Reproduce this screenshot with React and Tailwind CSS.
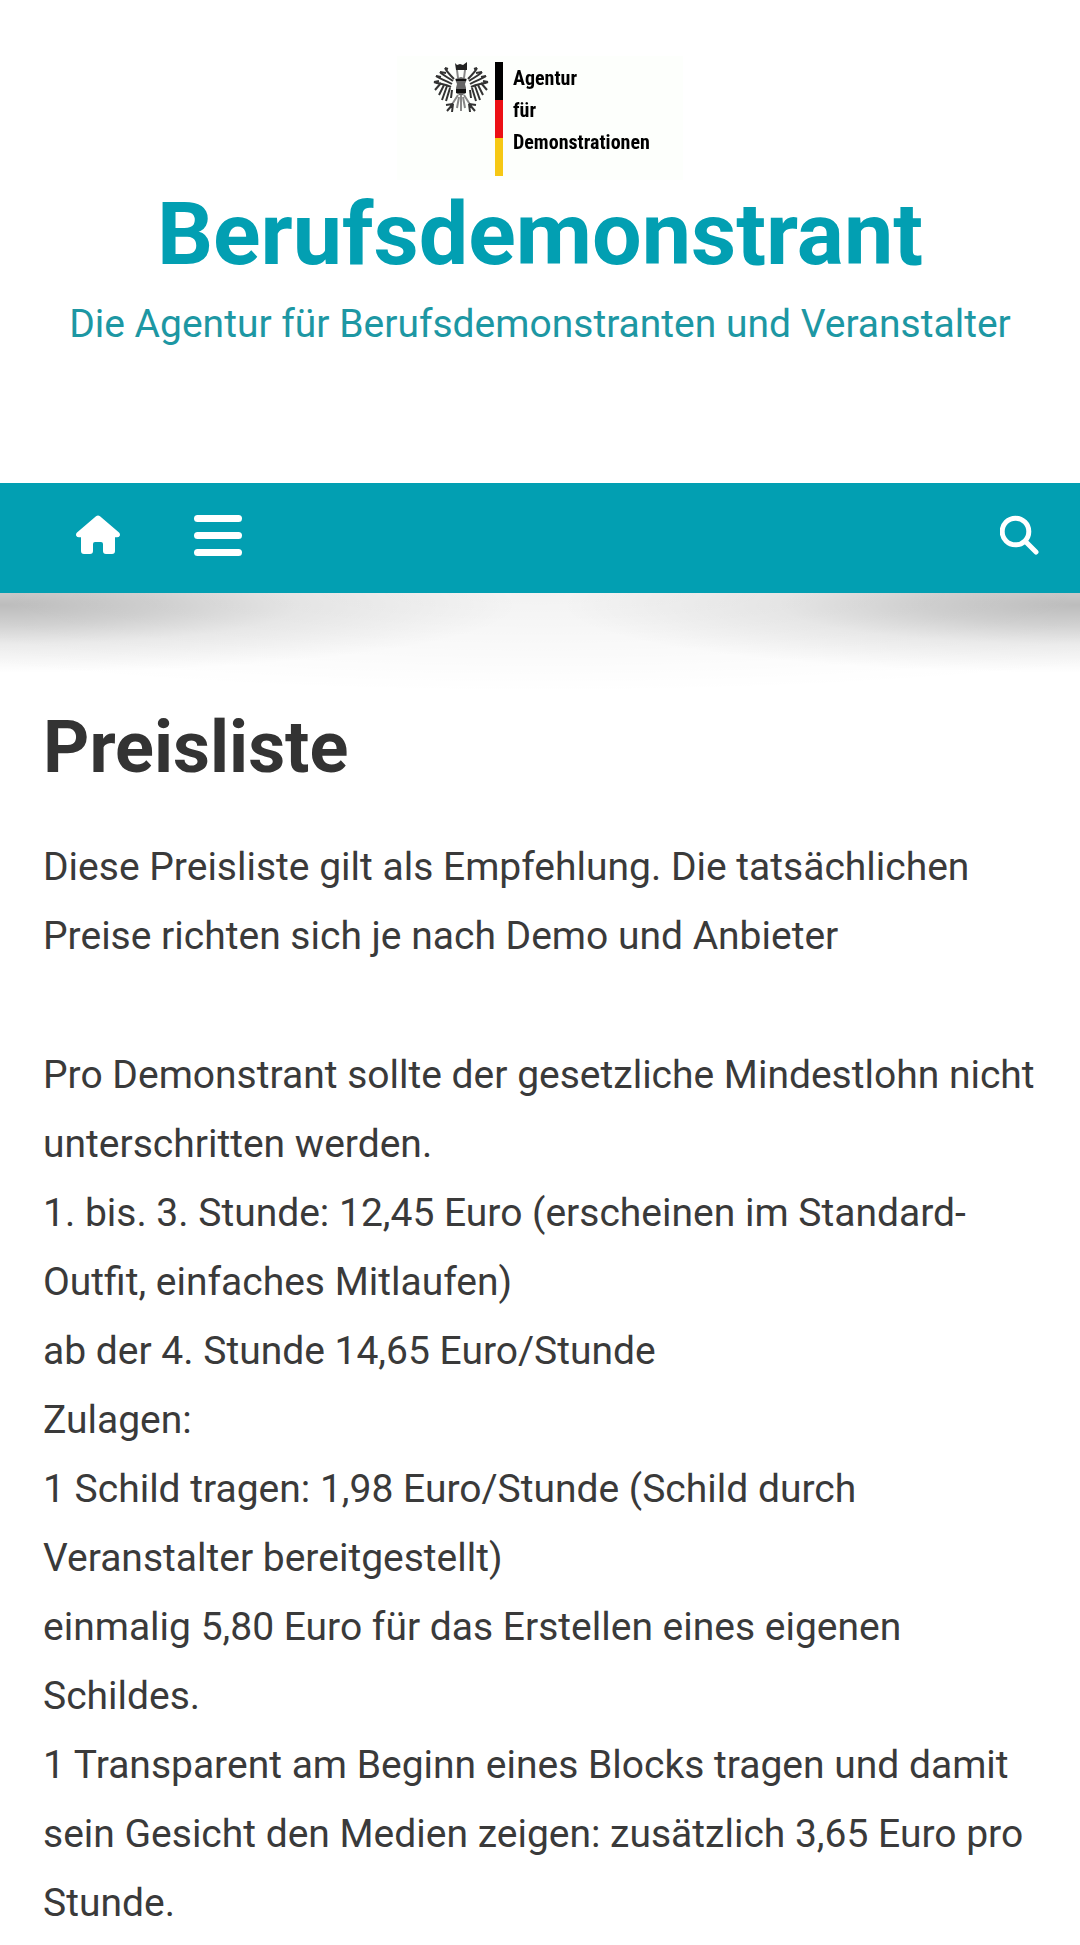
const FEATHERS = [
  "M21 17 C17 13 14 10 12 6 M20 19 C14 15 10 13 7 10 M19 22 C12 18 7 17 3 14 M18 25 C12 22 6 22 1 20",
  "M12 6 L15 7 M7 10 L13 11 M3 14 L8 15 M1 20 L6 19 M8 21 L2 28 M11 23 L6 33 M14 24 L9 38 M17 26 L13 39 M19 28 L18 36",
];

function Eagle() {
  return (
    <svg viewBox="0 0 56 52" className="h-[52px] w-14 blur-[0.5px]" fill="none" stroke="#333" strokeWidth="2" aria-hidden="true">
      {FEATHERS.map((d) => (
        <g key={d}>
          <path d={d} />
          <path d={d} transform="translate(56 0) scale(-1 1)" />
        </g>
      ))}
      <path d="M22 1 L24 3 L27 2 L30 3 L34 0 L34 8 L23 8 Z" fill="#222" stroke="none" />
      <path d="M24 8 L25 16 M32 8 L31 16" stroke="#888" />
      <path d="M22 17 L28 15 L34 17 L32 22 L33 26 L33 31 L28 34 L23 31 L23 26 L24 22 Z" fill="#666" stroke="none" />
      <path d="M23 18 H33 M24 28 H32 V30 H24 Z" fill="#111" stroke="#111" />
      <path d="M28 33 V49 M25 33 L18 44 M31 33 L38 44 M26 35 L24 46 M30 35 L32 46" stroke="#888" />
      <path d="M20 42 L13 43 M20 42 L14 49 M20 42 L19 50 M36 42 L43 43 M36 42 L42 49 M36 42 L37 50" />
    </svg>
  );
}

function Logo() {
  return (
    <a href="#start" aria-label="Agentur für Demonstrationen" className="flex h-[124px] w-[286px] gap-[6px] bg-[#fdfffc] pt-[6px] pl-9 text-left text-black">
      <Eagle />
      <span className="flex h-[114px] w-2 flex-col blur-[0.5px]">
        <span className="flex-1 bg-black" />
        <span className="flex-1 bg-[#ec1015]" />
        <span className="flex-1 bg-[#f6c814]" />
      </span>
      <span className="pl-1 font-['Roboto_Condensed','Roboto',sans-serif] text-[20px] leading-8 font-bold blur-[0.5px]">
        Agentur
        <br />
        für
        <br />
        Demonstrationen
      </span>
    </a>
  );
}

export default function App() {
  return (
    <div className="bg-white font-['Roboto',sans-serif] text-[#3a3a3a]">
      <header className="flex flex-col items-center pt-14 text-center">
        <Logo />
        <a href="#start" className="text-[88px] leading-[108px] font-bold text-[#029fb2]">Berufsdemonstrant</a>
        <p className="text-[39px] leading-[72px] text-[#1d97a3]">Die Agentur für Berufsdemonstranten und Veranstalter</p>
      </header>

      <nav className="mt-[123px] flex h-[110px] items-center bg-[#029fb2] pr-[41px] pb-[6px] pl-[76px] text-white">
        <a href="#start" aria-label="Startseite">
          <svg viewBox="0 0 44 40" className="h-10 w-11" fill="currentColor" aria-hidden="true">
            <path d="M20 1.2 Q22 -0.3 24 1.2 L43 17.5 Q44.6 19.3 43.6 21 Q43 22.3 41 22.3 H39 V36 Q39 39 36 39 H30 Q27 39 27 36 V29 Q27 27 25 27 H19 Q17 27 17 29 V36 Q17 39 14 39 H8 Q5 39 5 36 V22.3 H3 Q1 22.3 .4 21 Q-.6 19.3 1 17.5 Z" />
          </svg>
        </a>
        <button type="button" aria-label="Menü" className="ml-[74px] flex flex-col gap-[10px]">
          <span className="h-[7px] w-12 rounded-full bg-white" />
          <span className="h-[7px] w-12 rounded-full bg-white" />
          <span className="h-[7px] w-12 rounded-full bg-white" />
        </button>
        <button type="button" aria-label="Suche" className="ml-auto">
          <svg viewBox="0 0 39 40" className="h-10 w-[39px]" fill="none" stroke="currentColor" strokeWidth="5" strokeLinecap="round" aria-hidden="true">
            <circle cx="15.5" cy="16.5" r="13.3" />
            <path d="M25.5 26.5 L36 37" />
          </svg>
        </button>
      </nav>

      <div className="h-[100px] bg-[radial-gradient(ellipse_48%_68%_at_0%_12%,rgba(0,0,0,0.25),rgba(0,0,0,0.17)_30%,rgba(0,0,0,0.07)_58%,transparent),radial-gradient(ellipse_48%_68%_at_100%_12%,rgba(0,0,0,0.25),rgba(0,0,0,0.17)_30%,rgba(0,0,0,0.07)_58%,transparent),radial-gradient(ellipse_75%_100%_at_50%_0%,rgba(0,0,0,0.05),transparent)]" />

      <main className="px-[43px]">
        <h1 className="pt-3 text-[72px] leading-[86px] font-bold text-[#333]">Preisliste</h1>
        <div className="mt-[42px] text-[39px] leading-[69px]">
          <p>Diese Preisliste gilt als Empfehlung. Die tatsächlichen Preise richten sich je nach Demo und Anbieter</p>
          <p className="mt-[70px]">
            Pro Demonstrant sollte der gesetzliche Mindestlohn nicht unterschritten werden.
            <br />
            1. bis. 3. Stunde: 12,45 Euro (erscheinen im Standard-Outfit, einfaches Mitlaufen)
            <br />
            ab der 4. Stunde 14,65 Euro/Stunde
            <br />
            Zulagen:
            <br />
            1 Schild tragen: 1,98 Euro/Stunde (Schild durch Veranstalter bereitgestellt)
            <br />
            einmalig 5,80 Euro für das Erstellen eines eigenen Schildes.
            <br />
            1 Transparent am Beginn eines Blocks tragen und damit sein Gesicht den Medien zeigen: zusätzlich 3,65 Euro pro Stunde.
          </p>
        </div>
      </main>
    </div>
  );
}
